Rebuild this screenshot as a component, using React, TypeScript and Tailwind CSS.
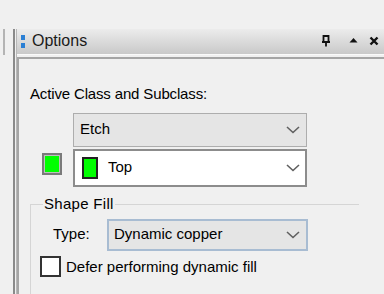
import { useState } from "react";

function Chevron() {
  return (
    <svg width="14" height="8" viewBox="0 0 14 8" className="shrink-0">
      <path d="M1 1 L7 6.5 L13 1" fill="none" stroke="#606060" strokeWidth="1.6" />
    </svg>
  );
}

export default function App() {
  const [defer, setDefer] = useState(false);

  return (
    <div
      className="w-[384px] h-[294px] overflow-hidden bg-[#f0f0f0] pt-[29px] flex text-[15px] text-[#000]"
      style={{ fontFamily: '"Liberation Sans", Arial, sans-serif' }}
    >
      {/* left splitter edge */}
      <div className="w-[17px] shrink-0 flex">
        <div className="ml-[3px] w-[2px] h-[26px] bg-[#b4b4b4]" />
        <div className="ml-[8px] w-[2px] bg-[#8a8a8a]" />
        <div className="ml-[1px] w-[1px] bg-[#b8b8b8]" />
      </div>

      <div className="flex-1 flex flex-col">
        {/* title bar */}
        <div className="h-[25px] flex items-center bg-gradient-to-b from-[#ececec] to-[#c9c9c9] pl-[4px] pr-[5px]">
          <div className="flex flex-col gap-[3px] mr-[7px]">
            <div className="w-[4px] h-[5px] bg-[#2a7fd4]" />
            <div className="w-[4px] h-[5px] bg-[#2a7fd4]" />
          </div>
          <span className="text-[16px] text-[#1a1a1a]">Options</span>
          <div className="ml-auto flex items-center">
            <svg width="10" height="12" viewBox="0 0 10 12">
              <path d="M2.5 1 H7.5 V7 H2.5 Z M1 7 H9 M5 7 V11.5" fill="none" stroke="#111" strokeWidth="1.8" />
            </svg>
            <svg width="9" height="6" viewBox="0 0 9 6" className="ml-[18px] mb-[2px]">
              <path d="M0.5 5.5 L4.5 1 L8.5 5.5 Z" fill="#111" />
            </svg>
            <svg width="10" height="10" viewBox="0 0 10 10" className="ml-[11px]">
              <path d="M1.5 1.5 L8.5 8.5 M8.5 1.5 L1.5 8.5" stroke="#111" strokeWidth="2.4" />
            </svg>
          </div>
        </div>
        <div className="h-[1px] bg-[#fafafa]" />
        <div className="h-[2px]" />

        {/* content */}
        <div className="flex-1 border-t-2 border-l-2 border-[#a5a5a5] pl-[11px] pt-[26px]">
          <div className="leading-[18px] tracking-[-0.15px]">Active Class and Subclass:</div>

          <div className="mt-[10px] flex">
            <div className="ml-[12px] w-[20px] shrink-0 pt-[40px]">
              <div className="w-[20px] h-[22px] border-2 border-[#7a7a7a] bg-[#bdbdbd] p-[1px]">
                <div className="w-full h-full bg-[#00ff00]" />
              </div>
            </div>
            <div className="ml-[11px] w-[234px]">
              <div className="h-[34px] border border-[#adadad] bg-[#e5e5e5] flex items-center pl-[6px] pr-[6px]">
                <span>Etch</span>
                <span className="ml-auto"><Chevron /></span>
              </div>
              <div className="mt-[2px] h-[38px] border-2 border-[#8c8c8c] bg-white flex items-center pl-[7px] pr-[5px]">
                <div className="w-[16px] h-[22px] border-2 border-[#222] bg-[#00ff00]" />
                <span className="ml-[10px]">Top</span>
                <span className="ml-auto"><Chevron /></span>
              </div>
            </div>
          </div>

          {/* group box */}
          <div className="mt-[17px] border-t border-l border-[#d5d5d5] w-[329px] pl-[9px] pb-[16px]">
            <div className="-mt-[10px] ml-[3px] px-[1px] w-fit bg-[#f0f0f0] leading-[18px] tracking-[0.3px]">Shape Fill</div>
            <div className="mt-[6px] flex items-center">
              <span className="ml-[13px] w-[54px]">Type:</span>
              <div className="w-[201px] h-[32px] border-2 border-[#a8bcd2] bg-[#e5e5e5] flex items-center pl-[5px] pr-[6px]">
                <span>Dynamic copper</span>
                <span className="ml-auto"><Chevron /></span>
              </div>
            </div>
            <label className="mt-[5px] flex items-center">
              <input
                type="checkbox"
                checked={defer}
                onChange={(e) => setDefer(e.target.checked)}
                className="appearance-none w-[21px] h-[21px] border-2 border-[#333] bg-white shrink-0"
              />
              <span className="ml-[5px]">Defer performing dynamic fill</span>
            </label>
          </div>
        </div>
      </div>
    </div>
  );
}
